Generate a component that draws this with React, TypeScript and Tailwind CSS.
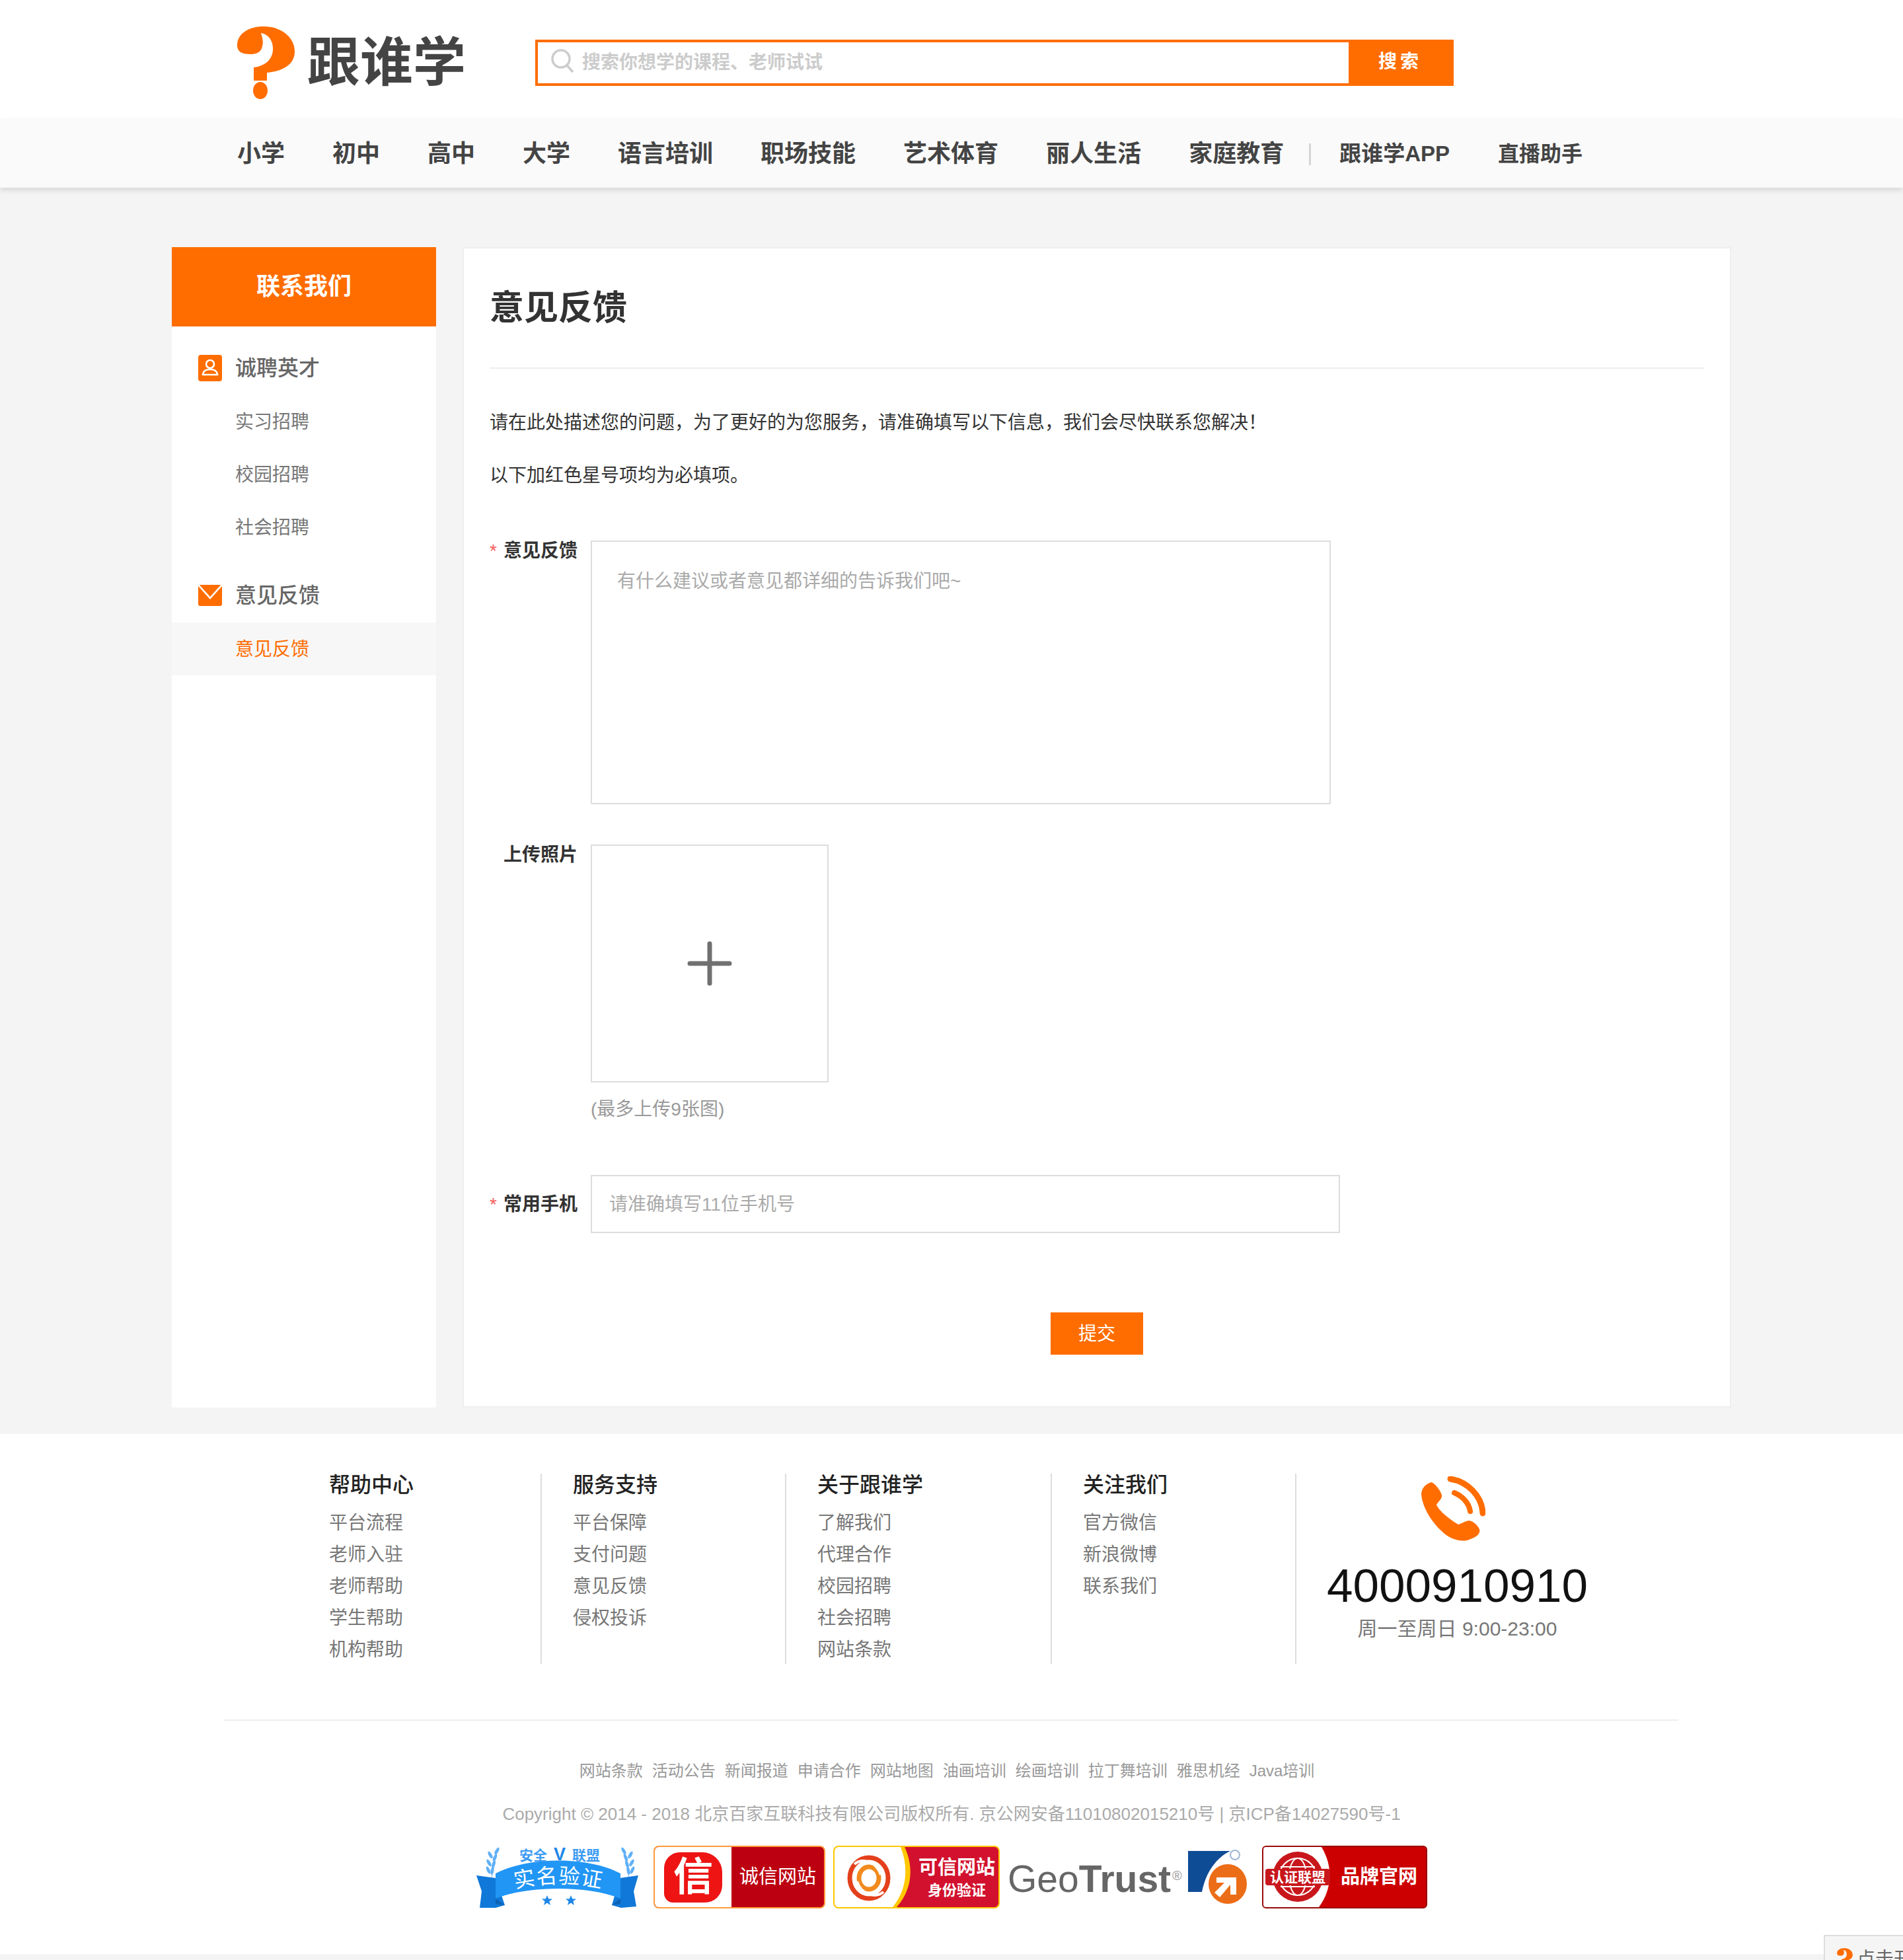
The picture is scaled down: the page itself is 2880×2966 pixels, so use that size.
import React from "react";

const FONT = '"Liberation Sans", "Noto Sans CJK SC", sans-serif';
const cjk = "Noto Sans CJK SC, sans-serif";
const nav = ["小学", "初中", "高中", "大学", "语言培训", "职场技能", "艺术体育", "丽人生活", "家庭教育"];
const cols = [
  { t: "帮助中心", w: "w-[322px]", pl: "", items: ["平台流程", "老师入驻", "老师帮助", "学生帮助", "机构帮助"] },
  { t: "服务支持", w: "w-[370px]", pl: "pl-[47px]", items: ["平台保障", "支付问题", "意见反馈", "侵权投诉"] },
  { t: "关于跟谁学", w: "w-[402px]", pl: "pl-[47px]", items: ["了解我们", "代理合作", "校园招聘", "社会招聘", "网站条款"] },
  { t: "关注我们", w: "w-[370px]", pl: "pl-[47px]", items: ["官方微信", "新浪微博", "联系我们"] },
];
const links = ["网站条款", "活动公告", "新闻报道", "申请合作", "网站地图", "油画培训", "绘画培训", "拉丁舞培训", "雅思机经", "Java培训"];

function QMark({ className }: { className: string }) {
  return (
    <svg viewBox="0 0 87 110" className={className}>
      <path fill="#ff6d00" d="M0 30C-1 12 16 0 40 0C66 0 87 16 87 38C87 58 68 68 45 70L45 82L25 82L25 62C42 60 54 50 54 34C54 22 48 12 36 10C38 18 40 22 38 30C36 40 28 42 20 42C6 42 1 38 0 30Z" />
      <ellipse cx="35" cy="97" rx="11" ry="13" fill="#ff6d00" />
    </svg>
  );
}

function Star({ x, y }: { x: number; y: number }) {
  return <path fill="#1c86e8" transform={`translate(${x} ${y})`} d="M0 -8L2.2 -2.4L8 -2.4L3.4 1.2L5 7L0 3.6L-5 7L-3.4 1.2L-8 -2.4L-2.2 -2.4Z" />;
}

function Laurel({ flip }: { flip?: boolean }) {
  const leaves = [
    [32, 8, 30],
    [29, 18, 25],
    [27, 28, 18],
    [25, 38, 10],
    [22, 14, -30],
    [20, 26, -30],
    [19, 37, -25],
  ];
  return (
    <g transform={flip ? "translate(256 0) scale(-1 1)" : undefined}>
      <path d="M33 5L24 49" stroke="#a8d4fb" strokeWidth="1.5" fill="none" />
      {leaves.map(([x, y, r]) => (
        <ellipse key={`${x}-${y}`} cx={x} cy={y} rx="2.4" ry="6" fill="#5fb0f7" transform={`rotate(${r} ${x} ${y})`} />
      ))}
    </g>
  );
}

function BadgeShield() {
  return (
    <svg viewBox="0 0 247 95" className="w-[247px] h-[95px] shrink-0">
      <Laurel />
      <Laurel flip />
      <path fill="#1078d8" d="M1 45L30 49L44 90L30 94L6 94L9 69Z" />
      <path fill="#1078d8" d="M246 45L218 49L206 90L220 94L243 92L239 69Z" />
      <path fill="#0c62b4" d="M30 80L44 90L30 88Z" />
      <path fill="#0c62b4" d="M219 80L206 90L219 88Z" />
      <path fill="#2196f5" d="M30 42C80 16 170 16 219 42L219 80C170 60 80 60 30 80Z" />
      <text x="66" y="22" fontSize="21" fontWeight="700" fill="#3d9bf2" fontFamily={cjk}>安全</text>
      <text x="127" y="22" textAnchor="middle" fontSize="27" fontWeight="700" fill="#1c86e8" fontFamily="Liberation Sans, sans-serif">V</text>
      <text x="146" y="22" fontSize="21" fontWeight="700" fill="#3d9bf2" fontFamily={cjk}>联盟</text>
      <path id="shield-arc" d="M50 67Q125 47 200 67" fill="none" />
      <text fontSize="32" fill="#fff" fontFamily={cjk} textAnchor="middle" letterSpacing="1">
        <textPath href="#shield-arc" startOffset="50%">实名验证</textPath>
      </text>
      <Star x={108} y={83} />
      <Star x={144} y={83} />
    </svg>
  );
}

function BadgeCredit() {
  return (
    <div className="ml-[10px] w-[260px] h-[95px] shrink-0 rounded-[8px] border-2 border-[#ff9a3c] bg-[#bd0011] flex overflow-hidden">
      <div className="w-[116px] bg-white flex items-center justify-center">
        <div className="w-[88px] h-[76px] rounded-[24px_30px_26px_14px] bg-[#ee1414] flex items-center justify-center text-white text-[60px] leading-[60px] font-bold">信</div>
      </div>
      <div className="flex-1 flex items-center justify-center text-white text-[29px] leading-none">诚信网站</div>
    </div>
  );
}

function BadgeTrust() {
  return (
    <div className="relative w-[252px] h-[95px] shrink-0 rounded-[8px] border-2 border-[#ffc800] bg-[#d2112e] overflow-hidden flex">
      <svg viewBox="0 0 118 91" className="w-[118px] h-[91px] shrink-0">
        <path d="M0 0H106C120 30 118 64 94 91H0Z" fill="#ffc800" />
        <path d="M0 0H100C112 30 110 64 88 91H0Z" fill="#fff" />
        <ellipse cx="52" cy="47" rx="29" ry="31" fill="none" stroke="#e3401b" strokeWidth="7" />
        <ellipse cx="52" cy="47" rx="15" ry="17" fill="none" stroke="#f28a1e" strokeWidth="7" />
        <path d="M30 26C42 16 64 22 70 42M74 68C62 78 40 72 34 52" fill="none" stroke="#fff" strokeWidth="4" />
      </svg>
      <div className="flex-1 flex flex-col items-center justify-center text-white font-bold pl-[4px]">
        <span className="text-[29px] leading-[40px] whitespace-nowrap">可信网站</span>
        <span className="text-[22px] leading-[30px] whitespace-nowrap">身份验证</span>
      </div>
    </div>
  );
}

function BadgeGeo() {
  return (
    <svg viewBox="0 0 362 95" className="w-[362px] h-[95px] shrink-0">
      <text x="0" y="70" fontSize="57" fill="#666" fontFamily="Liberation Sans, sans-serif">Geo<tspan fontWeight="700">Trust</tspan></text>
      <text x="249" y="52" fontSize="20" fill="#999" fontFamily="Liberation Sans, sans-serif">®</text>
      <path fill="#0f4c96" d="M273 8H337C316 18 300 40 294 70H273Z" />
      <ellipse cx="333" cy="58" rx="29" ry="30" fill="#ec6d17" />
      <circle cx="344" cy="14" r="7" fill="none" stroke="#9fb8d4" strokeWidth="2" />
      <path fill="#fff" d="M316 48H346V74H337V59L321 78L313 71L328 56H316Z" />
    </svg>
  );
}

function BadgeBrand() {
  return (
    <div className="ml-[11px] relative w-[250px] h-[95px] shrink-0 rounded-[6px] border-2 border-[#9a0b0b] bg-[#cc0000] overflow-hidden flex">
      <svg viewBox="0 0 112 91" className="w-[112px] h-[91px] shrink-0">
        <path d="M0 0H88C106 30 104 64 84 91H0Z" fill="#fff" />
        <circle cx="52" cy="45" r="38" fill="#c8171c" />
        <circle cx="52" cy="45" r="28" fill="none" stroke="#fff" strokeWidth="2" />
        <ellipse cx="52" cy="45" rx="13" ry="28" fill="none" stroke="#fff" strokeWidth="2" />
        <path d="M26 30H78M26 60H78" stroke="#fff" strokeWidth="2" />
        <rect x="3" y="33" width="98" height="25" rx="4" fill="#c8171c" />
        <text x="52" y="53" textAnchor="middle" fontSize="21" fontWeight="700" fill="#fff" fontFamily={cjk}>认证联盟</text>
      </svg>
      <div className="flex-1 flex items-center text-white text-[29px] leading-none font-bold whitespace-nowrap pl-[5px]">品牌官网</div>
    </div>
  );
}

function Label({ text, star }: { text: string; star?: boolean }) {
  return (
    <div className="w-[153px] shrink-0 flex justify-between pr-[20px] pt-[2px] text-[28px] leading-[28px] font-bold text-[#333]">
      <span className={star ? "text-[#f45b5b] font-normal" : "invisible"}>*</span>
      <span>{text}</span>
    </div>
  );
}

export default function App() {
  return (
    <div className="relative h-[2966px] overflow-hidden bg-[#f4f4f4]" style={{ fontFamily: FONT }}>
      <header className="h-[180px] pt-[10px] bg-white flex items-center">
        <div className="w-[2162px] mx-auto flex items-center">
          <div className="w-[451px] shrink-0 flex items-center gap-[19px]">
            <QMark className="w-[87px] h-[110px] shrink-0" />
            <span className="text-[80px] leading-[90px] font-bold text-[#444] whitespace-nowrap">跟谁学</span>
          </div>
          <div className="w-[1390px] h-[70px] flex border-4 border-[#ff6d00]">
            <div className="flex-1 flex items-center pl-[20px] gap-[13px]">
              <svg viewBox="0 0 34 36" className="w-[34px] h-[36px] shrink-0 -mt-[6px]" fill="none" stroke="#ccc" strokeWidth="3.5" strokeLinecap="round">
                <circle cx="15" cy="15" r="13" />
                <path d="M25 26L32 34" />
              </svg>
              <input placeholder="搜索你想学的课程、老师试试" className="flex-1 text-[28px] font-bold outline-none bg-transparent placeholder:text-[#ccc]" />
            </div>
            <button className="w-[156px] -mr-[1px] bg-[#ff6d00] text-white text-[28px] font-bold tracking-[5px] pb-[2px]">搜索</button>
          </div>
        </div>
      </header>

      <nav className="relative h-[104px] bg-[#fafafa] shadow-[0_4px_8px_rgba(0,0,0,0.12)]">
        <div className="w-[2162px] h-full pt-[2px] mx-auto flex items-center text-[#444] font-bold">
          <div className="flex gap-[72px] text-[36px] leading-[48px]">
            {nav.map((n) => (
              <a key={n} className="whitespace-nowrap">{n}</a>
            ))}
          </div>
          <span className="ml-[38px] w-[3px] h-[33px] bg-[#d4d4d4]" />
          <a className="ml-[43px] text-[33px] leading-[48px] whitespace-nowrap">跟谁学APP</a>
          <a className="ml-[73px] text-[32px] leading-[48px] whitespace-nowrap">直播助手</a>
        </div>
      </nav>

      <main className="w-[2360px] mx-auto pt-[90px] pb-[40px] flex gap-[40px] items-stretch">
        <aside className="w-[400px] shrink-0 bg-white">
          <div className="h-[120px] bg-[#ff6d00] flex items-center justify-center text-white text-[36px] font-bold">联系我们</div>
          <div className="mt-[22px] h-[80px] pt-[2px] flex items-center pl-[40px] gap-[20px] text-[32px] font-medium text-[#666]">
            <svg viewBox="0 0 36 40" className="w-[36px] h-[40px]">
              <rect width="36" height="40" rx="4" fill="#ff6d00" />
              <circle cx="18" cy="14" r="6" fill="none" stroke="#fff" strokeWidth="2.6" />
              <path d="M7 29C8 24 12 22 18 22C24 22 28 24 29 29V30H7Z" fill="none" stroke="#fff" strokeWidth="2.6" />
            </svg>
            诚聘英才
          </div>
          <div className="mt-[2px] text-[28px] text-[#777]">
            {["实习招聘", "校园招聘", "社会招聘"].map((t) => (
              <div key={t} className="h-[80px] pt-[2px] flex items-center pl-[96px]">{t}</div>
            ))}
          </div>
          <div className="mt-[22px] h-[80px] pt-[2px] flex items-center pl-[40px] gap-[20px] text-[32px] font-medium text-[#666]">
            <svg viewBox="0 0 36 32" className="w-[36px] h-[32px]">
              <rect width="36" height="32" rx="3" fill="#ff6d00" />
              <path d="M0 0L18 20L36 0" fill="none" stroke="#fff" strokeWidth="2.6" />
            </svg>
            意见反馈
          </div>
          <div className="mt-[2px] h-[80px] pt-[2px] flex items-center pl-[96px] bg-[#f7f7f7] text-[28px] text-[#ff6d00]">意见反馈</div>
        </aside>

        <section className="flex-1 bg-white border-2 border-[#eee] pl-[39px] pr-[39px] pb-[78px]">
          <div className="h-[182px] pt-[46px] border-b-2 border-[#eee] text-[52px] leading-[88px] font-bold text-[#333]">意见反馈</div>
          <p className="mt-[42px] text-[28px] leading-[80px] text-[#333]">请在此处描述您的问题，为了更好的为您服务，请准确填写以下信息，我们会尽快联系您解决！</p>
          <p className="text-[28px] leading-[80px] text-[#333]">以下加红色星号项均为必填项。</p>

          <div className="mt-[58px] flex">
            <Label text="意见反馈" star />
            <textarea
              placeholder="有什么建议或者意见都详细的告诉我们吧~"
              className="w-[1120px] h-[399px] border-2 border-[#ddd] px-[38px] pt-[40px] text-[28px] leading-[40px] outline-none resize-none placeholder:text-[#aaa]"
            />
          </div>

          <div className="mt-[61px] flex">
            <Label text="上传照片" />
            <div>
              <div className="w-[360px] h-[360px] border-2 border-[#ddd] flex items-center justify-center">
                <svg viewBox="0 0 68 68" className="w-[68px] h-[68px]" stroke="#707070" strokeWidth="7" strokeLinecap="round">
                  <path d="M34 4V64M4 34H64" />
                </svg>
              </div>
              <div className="mt-[21px] text-[28px] leading-[40px] text-[#999]">(最多上传9张图)</div>
            </div>
          </div>

          <div className="mt-[79px] flex items-center">
            <Label text="常用手机" star />
            <input
              placeholder="请准确填写11位手机号"
              className="w-[1134px] h-[88px] border-2 border-[#ddd] px-[26px] pt-[2px] text-[28px] outline-none placeholder:text-[#aaa]"
            />
          </div>

          <button className="block mx-auto mt-[120px] w-[140px] h-[64px] pt-[2px] bg-[#ff6d00] text-white text-[28px]">提交</button>
        </section>
      </main>

      <footer className="h-[787px] bg-white pt-[60px]">
        <div className="flex pl-[498px]">
          {cols.map((c) => (
            <div key={c.t} className={`${c.w} ${c.pl} h-[288px] border-r-2 border-[#ddd] shrink-0`}>
              <div className="text-[32px] leading-[34px] font-medium text-[#222]">{c.t}</div>
              <ul className="mt-[17px] text-[28px] leading-[48px] text-[#777]">
                {c.items.map((i) => (
                  <li key={i}>{i}</li>
                ))}
              </ul>
            </div>
          ))}
          <div className="w-[484px] shrink-0 flex flex-col items-center">
            <svg viewBox="0 0 97 98" className="mt-[4px] mr-[10px] w-[97px] h-[98px]">
              <path fill="#ff6d00" d="M15 9C6 12 0 18 0 28C2 48 16 70 32 84C44 96 62 100 72 96C82 92 90 88 88 80C84 72 78 68 72 67C66 68 60 72 56 73C44 66 26 52 23 43C26 38 32 34 31 28C28 20 20 10 15 9Z" />
              <path d="M44 4C70 8 92 30 93 56" fill="none" stroke="#ff6d00" strokeWidth="9" strokeLinecap="round" />
              <path d="M50 25C62 30 72 40 74 53" fill="none" stroke="#ff6d00" strokeWidth="8" strokeLinecap="round" />
            </svg>
            <div className="mt-[32px] ml-[3px] text-[71px] leading-[72px] text-[#111]">4000910910</div>
            <div className="mt-[9px] ml-[3px] text-[30px] leading-[40px] text-[#777] whitespace-nowrap">周一至周日 9:00-23:00</div>
          </div>
        </div>

        <div className="mt-[84px] mx-auto w-[2200px] h-[2px] bg-[#eee]" />
        <div className="mt-[60px] pr-[14px] flex justify-center gap-[14px] text-[24px] leading-[32px] text-[#999]">
          {links.map((l) => (
            <a key={l} className="whitespace-nowrap">{l}</a>
          ))}
        </div>
        <div className="mt-[33px] text-center text-[26px] leading-[32px] text-[#aaa] whitespace-nowrap">
          Copyright © 2014 - 2018 北京百家互联科技有限公司版权所有. 京公网安备11010802015210号 | 京ICP备14027590号-1
        </div>
        <div className="mt-[32px] flex justify-center items-center gap-[12px]">
          <BadgeShield />
          <BadgeCredit />
          <BadgeTrust />
          <BadgeGeo />
          <BadgeBrand />
        </div>
      </footer>

      <div className="absolute right-0 bottom-0 w-[120px] h-[38px] border-t-2 border-l-2 border-[#ddd] bg-[#f5f5f5] overflow-hidden flex items-start gap-[6px] pl-[18px] pt-[18px]">
        <QMark className="w-[24px] h-[30px] shrink-0" />
        <span className="text-[28px] leading-[34px] text-[#666] whitespace-nowrap">点击开始</span>
      </div>
    </div>
  );
}
